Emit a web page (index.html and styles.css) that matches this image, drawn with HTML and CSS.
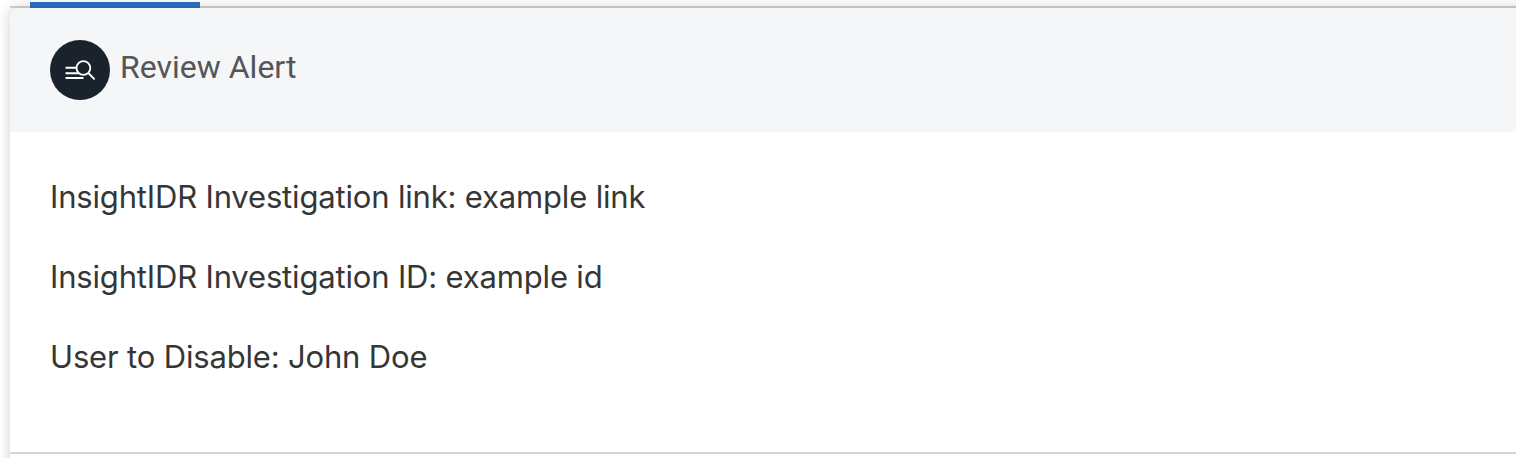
FILE: index.html
```html
<!DOCTYPE html>
<html lang="en">
<head>
<meta charset="utf-8">
<title>Review Alert</title>
<link rel="stylesheet" href="styles.css">
</head>
<body>
<div class="tabs"><div class="tab-active"></div></div>
<main class="card">
  <header class="card-header">
    <span class="badge">
      <svg class="icon" viewBox="0 0 60 60" fill="none" stroke="#fff" stroke-width="1.8">
        <circle cx="33.4" cy="28" r="6.9"/>
        <path d="M38.3 33l6.3 6.3"/>
        <path d="M15.5 27.8h11.3M15.5 33.2h13.8M15.5 38h18" stroke-width="2"/>
      </svg>
    </span>
    <h1 class="title">Review Alert</h1>
  </header>
  <section class="card-body">
    <p class="line">InsightIDR Investigation link: example link</p>
    <p class="line">InsightIDR Investigation ID: example id</p>
    <p class="line">User to Disable: John Doe</p>
  </section>
</main>
</body>
</html>
```
FILE: styles.css
```css
* { box-sizing: border-box; }
body { margin: 0; height: 458px; overflow: hidden; background: #fff; display: flex; flex-direction: column; }
.tabs { height: 8px; margin-left: 10px; padding: 2px 0 0 20px; border-bottom: 2px solid #d3d5d7; flex: none; }
.tab-active { width: 170px; height: 6px; background: #2c71c5; }
.card { margin: 0 -20px 0 10px; flex: none; height: 480px; border-top-left-radius: 10px; box-shadow: 0 0 14px rgba(0,0,0,.2); background: #fff; }
.card-header { height: 124px; padding: 32px 40px; display: flex; border-top-left-radius: 10px; background: #f4f6f8; }
.badge { width: 60px; height: 60px; border-radius: 50%; background: #1a222b; }
.icon { display: block; width: 60px; height: 60px; }
.title { margin: 7px 0 0 10px; font: 400 32px/40px Roboto, sans-serif; color: #545556; }
.card-body { height: 322px; padding: 45px 40px 0; border-bottom: 2px solid #d2d6da; }
.line { margin: 0 0 40px; font: 400 31px/40px Inter, sans-serif; letter-spacing: -0.17px; color: #363636; white-space: nowrap; }
```
